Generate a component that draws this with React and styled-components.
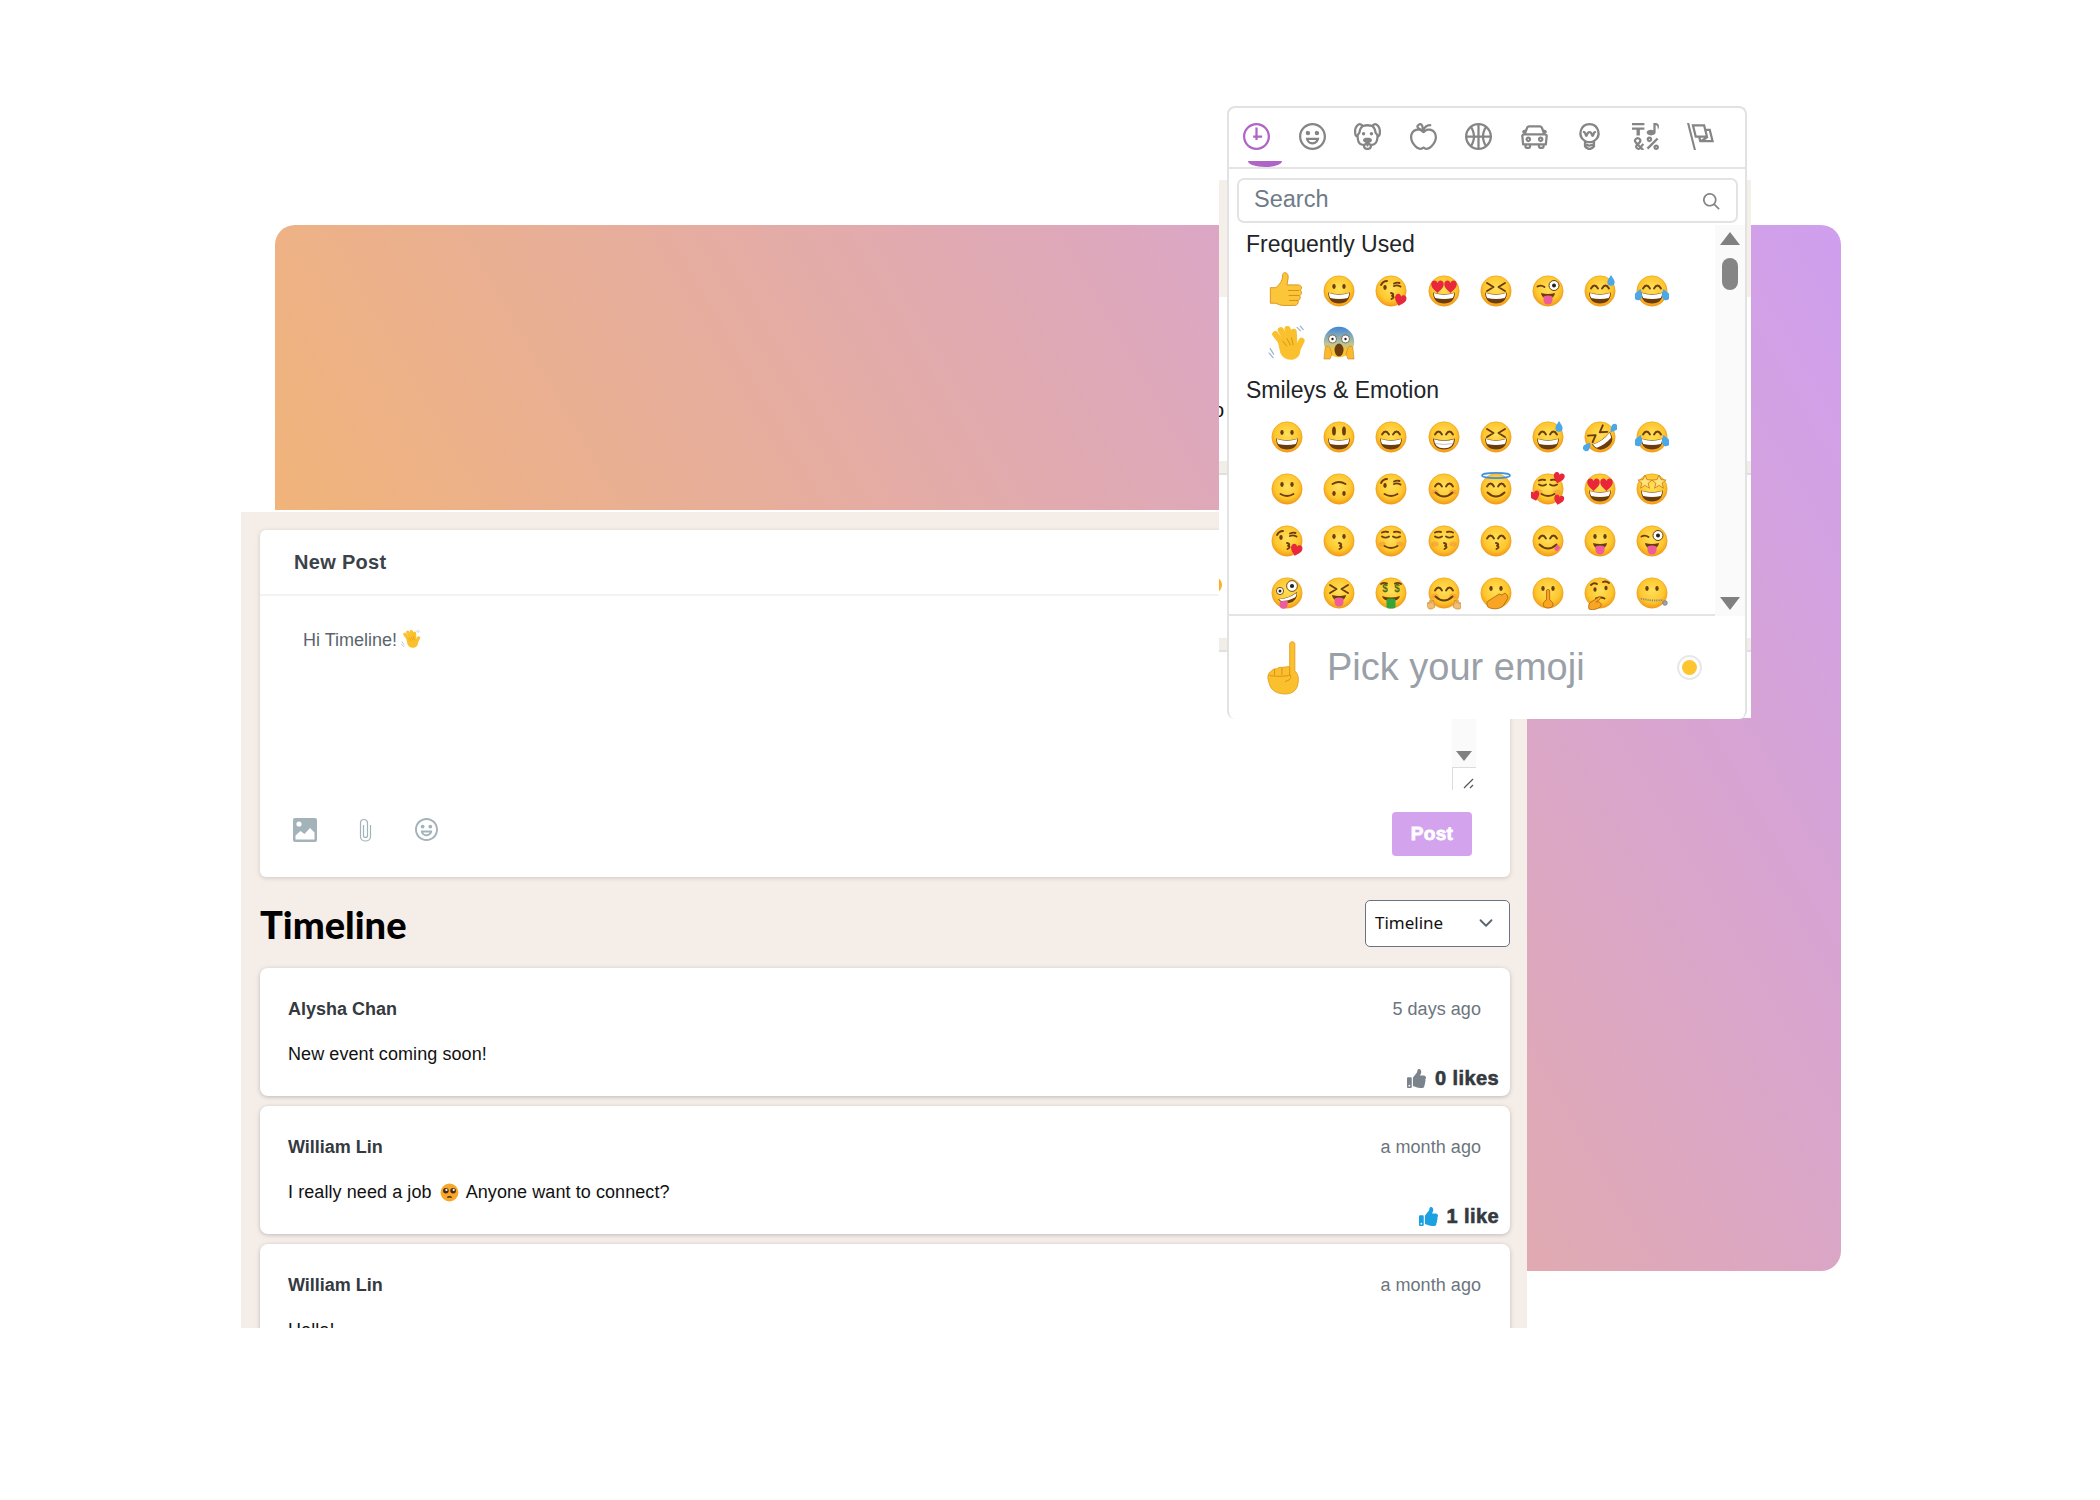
import React from 'react'
import styled, { createGlobalStyle } from 'styled-components'
import { FaThumbsUp } from 'react-icons/fa'
import { ChevronDown } from 'lucide-react'

const GlobalStyle = createGlobalStyle`
  html, body { margin: 0; padding: 0; background: #fff; }
  body { font-family: "Liberation Sans", Arial, sans-serif; }
  * { box-sizing: border-box; }
`

const Stage = styled.div`
  position: relative;
  width: 2100px;
  height: 1500px;
  padding: 225px 0 0 275px;
  overflow: hidden;
`

const Backdrop = styled.div`
  width: 1566px;
  height: 1046px;
  border-radius: 20px;
  background: linear-gradient(60deg, #f9b95c, #cf9fef);
`

const Panel = styled.main`
  position: absolute;
  left: 241px;
  top: 510px;
  width: 1286px;
  height: 818px;
  overflow: hidden;
  padding: 18px 17px 0 19px;
  border-top: 2px solid #fff;
  background: #f5eee8;
`

const PostCard = styled.section`
  position: relative;
  display: flex;
  flex-direction: column;
  height: 347px;
  border-radius: 6px;
  background: #fff;
  box-shadow: 0 1px 4px rgba(90, 80, 70, 0.25);
`

const PostHeader = styled.h2`
  display: flex;
  align-items: center;
  height: 66px;
  margin: 0;
  padding-left: 34px;
  border-bottom: 2px solid #f3f3f3;
  color: #3b4249;
  font-size: 20px;
  font-weight: 700;
  letter-spacing: 0.3px;
`

const PostBody = styled.div`
  display: flex;
  flex: 1;
  align-items: flex-start;
  padding: 33px 0 0 43px;
  color: #5b646d;
  font-size: 18px;
  line-height: 22px;
`

const TextScroll = styled.div`
  position: absolute;
  left: 1192px;
  top: 188px;
  display: flex;
  align-items: flex-end;
  justify-content: center;
  width: 24px;
  height: 50px;
  padding-bottom: 7px;
  background: #fafafa;
`

const DownArrow = styled.span`
  width: 0;
  height: 0;
  border-left: ${p => p.$w}px solid transparent;
  border-right: ${p => p.$w}px solid transparent;
  border-top: ${p => p.$h}px solid #808080;
`

const UpArrow = styled.span`
  width: 0;
  height: 0;
  border-left: 10px solid transparent;
  border-right: 10px solid transparent;
  border-bottom: 13px solid #808080;
`

const Resizer = styled.div`
  position: absolute;
  left: 1192px;
  top: 237px;
  display: flex;
  align-items: flex-end;
  justify-content: flex-end;
  width: 24px;
  height: 23px;
  border-top: 1px solid #dcdcdc;
  border-left: 1px solid #dcdcdc;
`

const PostTools = styled.div`
  display: flex;
  align-items: center;
  justify-content: space-between;
  padding: 0 38px 21px 14px;
`

const ToolIcons = styled.div`
  display: flex;
  margin-bottom: 9px;
`

const ToolSlot = styled.span`
  display: flex;
  align-items: center;
  justify-content: center;
  width: 61px;
  height: 24px;
`

const PostButton = styled.button`
  width: 80px;
  height: 44px;
  padding: 0;
  border: 0;
  border-radius: 4px;
  background: #d3a3ee;
  color: #fff;
  font-family: inherit;
  font-size: 19px;
  font-weight: 700;
  letter-spacing: 0.3px;
  -webkit-text-stroke: 0.8px #fff;
`

const TimelineBar = styled.div`
  display: flex;
  align-items: center;
  justify-content: space-between;
  margin: 23px 0 21px;
`

const TimelineTitle = styled.h1`
  margin: 0;
  color: #000;
  font-family: Lato, sans-serif;
  font-size: 38px;
  font-weight: 900;
`

const FeedSelect = styled.div`
  display: flex;
  align-items: center;
  justify-content: space-between;
  width: 145px;
  height: 47px;
  padding: 0 12px 2px 9px;
  border: 1px solid #6b7280;
  border-radius: 5px;
  background: #fff;
  color: #111;
  font-family: "Noto Sans", sans-serif;
  font-size: 17px;
`

const Feed = styled.div`
  display: flex;
  flex-direction: column;
  gap: 10px;
`

const FeedCard = styled.article`
  height: 128px;
  padding: 29px 29px 0 28px;
  border-radius: 8px;
  background: #fff;
  box-shadow: 0 1px 4px rgba(90, 90, 100, 0.35);
`

const FeedHead = styled.div`
  display: flex;
  justify-content: space-between;
  line-height: 24px;
`

const Author = styled.strong`
  color: #343a40;
  font-size: 18px;
`

const When = styled.span`
  color: #6c757d;
  font-size: 18px;
  letter-spacing: 0.05px;
`

const Message = styled.p`
  display: flex;
  align-items: center;
  margin: 21px 0 0;
  color: #111;
  font-size: 18px;
  line-height: 24px;
  letter-spacing: 0.08px;
`

const Likes = styled.div`
  display: flex;
  align-items: center;
  justify-content: flex-end;
  gap: 9px;
  margin-right: -18px;
  color: #343a40;
  font-size: 20px;
  font-weight: 700;
  line-height: 24px;
  letter-spacing: 0.4px;
  -webkit-text-stroke: 0.6px #343a40;
`

const ThumbIcon = styled(FaThumbsUp)`
  width: 19px;
  height: 19px;
  color: ${p => (p.$active ? '#1ba1e2' : '#7b848c')};
`

const PickerShade = styled.div`
  position: absolute;
  left: 1219px;
  top: 180px;
  width: 532px;
  height: 538px;
  overflow: hidden;
  background: linear-gradient(
    #f4efe9 0 117px,
    #fff 117px 281px,
    #f1ede7 281px 293px,
    #dfe0e2 293px 295px,
    #fff 295px 458px,
    #f1ede7 458px 470px,
    #dfe0e2 470px 472px,
    #fff 472px
  );
`

const PeekLetter = styled.span`
  position: absolute;
  left: -6px;
  top: 218px;
  color: #111;
  font-size: 20px;
  line-height: 24px;
`

const PeekDot = styled.span`
  position: absolute;
  left: -13px;
  top: 397px;
  width: 16px;
  height: 16px;
  border-radius: 50%;
  background: #fdb022;
`

const Picker = styled.aside`
  position: absolute;
  left: 1227px;
  top: 106px;
  display: flex;
  flex-direction: column;
  width: 520px;
  height: 613px;
  overflow: hidden;
  border: 2px solid #e2e2e2;
  border-bottom: 0;
  border-radius: 8px;
  background: #fff;
  color: #222427;
`

const PickerTabs = styled.nav`
  display: grid;
  grid-template-columns: repeat(9, 55.5px);
  flex: none;
  height: 61px;
  border-bottom: 2px solid #e4e4e4;
`

const PickerTab = styled.span`
  position: relative;
  display: flex;
  align-items: center;
  justify-content: center;
  padding-bottom: 2px;
  color: ${p => (p.$active ? '#ae65c5' : '#858585')};
`

const TabMark = styled.i`
  position: absolute;
  left: 19px;
  bottom: 0;
  width: 34px;
  height: 6px;
  border-radius: 0 0 50% 50% / 0 0 100% 100%;
  background: #ae65c5;
`

const SearchBox = styled.div`
  display: flex;
  flex: none;
  align-items: center;
  justify-content: space-between;
  height: 45px;
  margin: 9px 7px 2px 8px;
  padding: 0 16px 2px 15px;
  border: 2px solid #e3e3e3;
  border-radius: 7px;
  color: #6e7b88;
  font-size: 23.5px;
`

const SearchIcon = styled.svg`
  width: 17px;
  height: 17px;
  margin-top: 3px;
  fill: #858585;
`

const ScrollArea = styled.div`
  display: flex;
  flex: none;
  height: 391px;
`

const EmojiList = styled.div`
  flex: 1;
  overflow: hidden;
  border-bottom: 2px solid #e4e4e4;
`

const SectionLabel = styled.h3`
  height: 38px;
  margin: 0 0 2px;
  padding-left: 17px;
  font-size: 23px;
  font-weight: 400;
  line-height: 38px;
`

const EmojiGrid = styled.div`
  display: grid;
  grid-template-columns: repeat(8, 52.2px);
  grid-auto-rows: 52px;
  margin-bottom: 2px;
  padding-left: 32px;
`

const EmojiCell = styled.span`
  display: flex;
  align-items: center;
  justify-content: center;
`

const ScrollTrack = styled.div`
  position: relative;
  display: flex;
  flex: none;
  flex-direction: column;
  align-items: center;
  justify-content: space-between;
  width: 30px;
  padding: 7px 0 6px;
  background: #fafafa;
`

const ScrollThumb = styled.span`
  position: absolute;
  top: 33px;
  width: 16px;
  height: 32px;
  border-radius: 8px;
  background: #858585;
`

const Preview = styled.footer`
  display: flex;
  flex: 1;
  align-items: center;
  padding: 0 43px 0 29px;
`

const PreviewText = styled.span`
  flex: 1;
  margin-left: 15px;
  color: #9aa0a8;
  font-size: 38px;
`

const SkinDot = styled.span`
  display: flex;
  align-items: center;
  justify-content: center;
  width: 25px;
  height: 25px;
  border: 2px solid #e8e8e8;
  border-radius: 50%;

  &::after {
    content: '';
    width: 15px;
    height: 15px;
    border-radius: 50%;
    background: #ffc531;
  }
`

const EmojiSvg = styled.svg`
  flex: none;
  width: ${p => p.$size}px;
  height: ${p => p.$size}px;
  margin: ${p => p.$gap || '0'};
`

const ink = '#6b3d0e'
const line = { fill: 'none', stroke: ink, strokeWidth: 1.9, strokeLinecap: 'round', strokeLinejoin: 'round' }
const tongueFill = '#ee5c9c'

const Heart = ({ x, y, s = 1, r = 0 }) => (
  <path
    transform={`translate(${x} ${y}) rotate(${r}) scale(${s})`}
    fill="#e8273c"
    d="M0 -2C-1 -5 -5 -4.5 -5 -1C-5 2 -2 4 0 6C2 4 5 2 5 -1C5 -4.5 1 -5 0 -2Z"
  />
)

const Drop = ({ x, y, s = 1, r = 0 }) => (
  <path transform={`translate(${x} ${y}) rotate(${r}) scale(${s})`} fill="#4aa8e8" d="M0 -5C2 -2 3 -.5 3 1A3 3 0 0 1 -3 1C-3 -.5 -2 -2 0 -5Z" />
)

const Cheeks = () => (
  <g fill="#f7853a" opacity="0.45">
    <ellipse cx="8" cy="20" rx="3.6" ry="2.6" />
    <ellipse cx="26" cy="20" rx="3.6" ry="2.6" />
  </g>
)

const eyes = {
  dots: (
    <g fill={ink}>
      <ellipse cx="12" cy="12.5" rx="1.7" ry="2.4" />
      <ellipse cx="22" cy="12.5" rx="1.7" ry="2.4" />
    </g>
  ),
  tall: (
    <g fill={ink}>
      <ellipse cx="12" cy="11" rx="1.9" ry="4.6" />
      <ellipse cx="22" cy="11" rx="1.9" ry="4.6" />
    </g>
  ),
  happy: <path {...line} d="M8 14.5Q11.5 8.5 15 14.5M19 14.5Q22.5 8.5 26 14.5" />,
  squint: <path {...line} d="M8 9l6.5 4-6.5 4M26 9l-6.5 4 6.5 4" />,
  closed: <path {...line} d="M8 12.5q3.5 2.2 7 0M19 12.5q3.5 2.2 7 0M8 8.5q3-1.5 6-.5M20 8q3-1 6 .5" />,
  wink: (
    <g>
      <path {...line} d="M7 11q2-4 6-4M20 12q3-1.5 6.5 .5M20 9.5q3-1.5 5.5-.5" />
      <ellipse cx="11" cy="13.5" rx="1.7" ry="2.4" fill={ink} />
    </g>
  ),
  winkEye: (
    <g>
      <path {...line} d="M6.5 12.5q3.5-2 7 .5" />
      <circle cx="23" cy="11.5" r="5" fill="#fff" stroke={ink} strokeWidth="1" />
      <circle cx="23" cy="11.5" r="2" fill="#222" />
    </g>
  ),
  hearts: (
    <g>
      <Heart x={10.5} y={11.5} s={1.25} />
      <Heart x={23.5} y={11.5} s={1.25} />
    </g>
  ),
  stars: (
    <g fill="#ffe27a" stroke="#c9761a" strokeWidth="0.8">
      <path d="M10 3l2 4.6 5 .4-3.800 3.200 1.200 5-4.400-2.800-4.400 2.800 1.200-5L3 8l5-.4z" />
      <path d="M24 3l2 4.600 5 .4-3.800 3.200 1.200 5-4.400-2.800-4.400 2.800 1.200-5L17 8l5-.4z" />
    </g>
  ),
  brow: (
    <g>
      <path {...line} d="M8 9q3-3 6-1M20 6q3-1.5 6 1" />
      <ellipse cx="12" cy="13.5" rx="1.6" ry="2.2" fill={ink} />
      <ellipse cx="23" cy="12" rx="1.6" ry="2.2" fill={ink} />
    </g>
  ),
  money: (
    <g fill="#4a6b12" fontFamily="Liberation Sans, sans-serif" fontSize="10" fontWeight="700" textAnchor="middle">
      <text x="11" y="16">$</text>
      <text x="23" y="16">$</text>
      <path {...line} d="M7 8q3-2 6-.5M21 7.5q3-1.5 6 .5" />
    </g>
  ),
}

const mouths = {
  grin: (
    <g>
      <path fill={ink} d="M6 18.5Q17 22 28 18.5Q27.5 29.5 17 29.5Q6.5 29.5 6 18.5Z" />
      <path fill="#fff" d="M6.8 19Q17 22.4 27.2 19Q27 22.2 25.7 24Q17 26.2 8.3 24Q7 22.2 6.8 19Z" />
    </g>
  ),
  beam: (
    <g>
      <path fill={ink} d="M6 18.5Q17 22 28 18.5Q27.5 29.5 17 29.5Q6.5 29.5 6 18.5Z" />
      <path fill="#fff" d="M7 19.2Q17 22.4 27 19.2Q26.5 28.3 17 28.3Q7.5 28.3 7 19.2Z" />
      <path fill="none" stroke="#b9b4ae" strokeWidth="0.8" d="M8 23.5Q17 25.5 26 23.5" />
    </g>
  ),
  smile: <path {...line} d="M10.5 22Q17 26 23.5 22" />,
  big: <path {...line} d="M8.5 20.5Q17 28.5 25.5 20.5" />,
  kiss: <path {...line} d="M17 19q4 1 1 2.8q3.5 1.2-.5 3.2" />,
  tongue: (
    <g>
      <path fill={ink} d="M10 19Q17 21 24 19Q23.5 24.5 17 24.5Q10.5 24.5 10 19Z" />
      <path fill={tongueFill} d="M12.5 22.5Q17 20.5 21.5 22.5V26a4.5 4.5 0 0 1-9 0Z" />
    </g>
  ),
}

const faces = {
  grinning: [eyes.dots, mouths.grin],
  smiley: [eyes.tall, mouths.grin],
  smile: [eyes.happy, mouths.grin],
  beam: [eyes.happy, mouths.beam],
  laughing: [eyes.squint, mouths.grin],
  sweat: [eyes.happy, mouths.grin, <Drop key="d" x={28} y={7} s={1.2} />],
  rofl: [
    <g key="r" transform="rotate(-35 17 17)">{eyes.squint}{mouths.grin}</g>,
    <Drop key="a" x={4} y={27} s={1.1} r={40} />,
    <Drop key="b" x={31} y={8} s={1.1} r={220} />,
  ],
  joy: [eyes.happy, mouths.grin, <Drop key="a" x={3.5} y={21} s={1.3} r={20} />, <Drop key="b" x={30.5} y={21} s={1.3} r={-20} />],
  slight: [eyes.dots, mouths.smile],
  upside: [<g key="u" transform="rotate(180 17 17)">{eyes.dots}{mouths.smile}</g>],
  wink: [eyes.wink, mouths.smile],
  blush: [<Cheeks key="c" />, eyes.happy, mouths.big],
  innocent: [
    eyes.happy,
    mouths.big,
    <ellipse key="h" cx="17" cy="3.5" rx="14" ry="2.6" fill="none" stroke="#3f8fe0" strokeWidth="1.6" />,
  ],
  hearts: [
    <Cheeks key="c" />,
    eyes.closed,
    mouths.smile,
    <Heart key="a" x={28} y={5} s={1.1} r={15} />,
    <Heart key="b" x={3.5} y={23} s={1} r={-15} />,
    <Heart key="e" x={28} y={27} s={1} r={15} />,
  ],
  heartEyes: [eyes.hearts, mouths.grin],
  star: [mouths.grin, eyes.stars],
  kissHeart: [eyes.wink, mouths.kiss, <Heart key="h" x={26.5} y={25} s={1.15} r={15} />],
  kissing: [eyes.dots, mouths.kiss],
  relaxed: [<Cheeks key="c" />, eyes.closed, mouths.smile],
  kissClosed: [<Cheeks key="c" />, eyes.closed, mouths.kiss],
  kissSmiling: [eyes.happy, mouths.kiss],
  yum: [eyes.happy, mouths.big, <path key="t" fill={tongueFill} d="M23 25l3.5-4.5 3 3-3.5 4z" />],
  tongue: [eyes.dots, mouths.tongue],
  winkTongue: [eyes.winkEye, mouths.tongue],
  zany: [
    <circle key="a" cx="10" cy="15" r="3.6" fill="#fff" stroke={ink} strokeWidth="0.9" />,
    <circle key="b" cx="10" cy="15" r="1.5" fill="#222" />,
    <circle key="c" cx="22" cy="10" r="5.4" fill="#fff" stroke={ink} strokeWidth="0.9" />,
    <circle key="e" cx="22" cy="10" r="2.1" fill="#222" />,
    <path key="m" fill={ink} d="M8 23Q18 23 27 16Q28 25 19 27Q11 28 8 23Z" />,
    <path key="w" fill="#fff" d="M9 23Q18 23 26.6 17Q26.5 20 25 21.5Q17 25.5 11 25Z" />,
    <path key="t" fill={tongueFill} d="M10 26Q14 24 18 25.5L17.5 29a4 4 0 0 1-8-.5Z" />,
  ],
  squintTongue: [eyes.squint, mouths.tongue],
  money: [
    eyes.money,
    <path key="m" fill={ink} d="M8 20Q17 23 26 20Q25 25 17 25Q9 25 8 20Z" />,
    <rect key="t" x="12.5" y="22.5" width="9" height="10" rx="2" fill="#35a53a" />,
  ],
  hug: [
    <Cheeks key="c" />,
    eyes.happy,
    mouths.big,
    <g key="h" fill="#f0bd73" stroke="#c97f2d" strokeWidth="0.6">
      <path d="M0 30l1-4 1 2 1-4 1 3 2-3 1 4 1 3-3 2H2z" />
      <path d="M34 30l-1-4-1 2-1-4-1 3-2-3-1 4-1 3 3 2h4z" />
    </g>,
  ],
  handOver: [
    eyes.dots,
    <path key="h" fill="#f8a523" stroke="#b96a10" strokeWidth="0.9" d="M9 31c-2-3-1-6 2-7l9-6 3 1 3-2 2 2 1 3-5 8c-3 3-10 4-15 1z" />,
  ],
  shush: [
    eyes.dots,
    <path key="h" fill="#f8a523" stroke="#b96a10" strokeWidth="0.9" d="M15.5 15a1.6 1.6 0 0 1 3.2 0V24c2 1 4 3 3 6-1 2-7 3-9 0-1-2 0-5 2.8-6Z" />,
  ],
  thinking: [
    eyes.brow,
    <path key="m" {...line} d="M13 22.5q5-2 8.5 0" />,
    <path key="h" fill="#f8a523" stroke="#b96a10" strokeWidth="0.9" d="M6 33c-1-3 0-6 2-7l8-5c2-1 2 2 0 3l-3 2c3-1 6 1 5 4-1 2-8 5-12 3z" />,
  ],
  zipper: [
    eyes.dots,
    <path key="z" fill="none" stroke="#7f8890" strokeWidth="1.8" strokeDasharray="1.2 1" d="M6 22.5Q17 25.5 28 24" />,
    <circle key="t" cx="30" cy="27" r="2.4" fill="#9aa1a8" stroke="#666" strokeWidth="0.5" />,
  ],
}

const FaceGradients = () => (
  <defs>
    <radialGradient id="faceFill" cx="50%" cy="42%" r="58%">
      <stop offset="0" stopColor="#ffe05a" />
      <stop offset="0.68" stopColor="#fec72e" />
      <stop offset="1" stopColor="#f39a17" />
    </radialGradient>
    <linearGradient id="screamFill" x1="0" y1="0" x2="0" y2="1">
      <stop offset="0" stopColor="#3f86dc" />
      <stop offset="0.55" stopColor="#b8c59a" />
      <stop offset="0.8" stopColor="#fcc52c" />
    </linearGradient>
  </defs>
)

const Face = ({ name, size = 34, gap }) => (
  <EmojiSvg viewBox="0 0 34 34" $size={size} $gap={gap}>
    <FaceGradients />
    <circle cx="17" cy="17" r="15.2" fill="url(#faceFill)" stroke="#e89a1f" strokeWidth="0.5" />
    {faces[name].map((part, i) => (
      <React.Fragment key={i}>{part}</React.Fragment>
    ))}
  </EmojiSvg>
)

const ThumbEmoji = () => (
  <EmojiSvg viewBox="0 0 34 36" $size={40}>
    <path fill="#fcc63a" stroke="#d98d16" strokeWidth="0.8" d="M15 1.500c2.400 0 3.400 2.200 3 5l-1 6h10c3.400 0 3.800 3.600 2 4.800 1.800 1.600 1.200 4-.6 4.700 1.200 2 .2 4-1.400 4.500.6 2.300-.6 4.500-3.200 4.500H14c-3 0-5-1-7-2H2V15h5c3-2.500 6-6 6-10.500 0-2 .9-3 2-3z" />
    <path fill="none" stroke="#d98d16" strokeWidth="0.9" d="M18 17.500h10M18.500 22h9.500M19 26.500h8" />
  </EmojiSvg>
)

const WaveEmoji = ({ size = 38, gap }) => (
  <EmojiSvg viewBox="0 0 34 34" $size={size} $gap={gap}>
    <g stroke="#fbc02d" strokeWidth="5.500" strokeLinecap="round" fill="none">
      <path d="M15 20L6.500 9" />
      <path d="M18 17L11.500 5.500" />
      <path d="M21 16L17.500 4.500" />
      <path d="M23.500 17L23 7" />
      <path d="M25.500 24L30 15" />
    </g>
    <path fill="#fbc02d" d="M9 17l16-2 4 8c0 6-4 9-9 9-4 0-7-2-9-6z" />
    <path fill="none" stroke="#d98d16" strokeWidth="0.8" d="M13 15l4 5M17 13l3 6M21 12l1.500 7" />
    <path fill="none" stroke="#9fb4d4" strokeWidth="1.100" strokeLinecap="round" d="M2 22l3 5M1 26l3.500 4M26 3l3 3M29 2l2.500 3" />
  </EmojiSvg>
)

const ScreamEmoji = () => (
  <EmojiSvg viewBox="0 0 34 34" $size={34}>
    <FaceGradients />
    <circle cx="17" cy="16" r="15.200" fill="url(#screamFill)" />
    <circle cx="10.500" cy="13" r="4" fill="#fff" stroke={ink} strokeWidth="0.7" />
    <circle cx="23.500" cy="13" r="4" fill="#fff" stroke={ink} strokeWidth="0.7" />
    <circle cx="10.500" cy="13" r="1.200" fill="#222" />
    <circle cx="23.500" cy="13" r="1.200" fill="#222" />
    <ellipse cx="17" cy="24" rx="4.500" ry="6.500" fill={ink} />
    <g fill="#fcb92c" stroke="#c97f2d" strokeWidth="0.6">
      <path d="M2 33l1-10c0-3 4-4 5-1l2 6-2 5z" />
      <path d="M32 33l-1-10c0-3-4-4-5-1l-2 6 2 5z" />
    </g>
  </EmojiSvg>
)

const PointEmoji = () => (
  <EmojiSvg viewBox="0 0 34 52" $size={54}>
    <path fill="#fbc02d" stroke="#e29a1c" strokeWidth="0.8" d="M21.500 3c0-3 5-3 5 0v26c3 2 4 7 3 12-1 7-6 10-12 10-8 0-13-3-15-8-1-3-2-6-2-8 0-3 1.500-5 3.500-6 1-2 3.500-2.500 5-2 1-1.500 3-2 5-1.500l7.500-1z" />
    <path fill="none" stroke="#d98d16" strokeWidth="0.9" d="M7 27v6M14 25.500v7M21.500 25v8M2 33c4 1.500 16 1 20 0 2 3-1 5-5 6" />
  </EmojiSvg>
)

const SmallFrown = () => (
  <EmojiSvg viewBox="0 0 34 34" $size={19} $gap="0 7px 0 8px">
    <circle cx="17" cy="17" r="16" fill="#f9a72a" />
    <circle cx="10.500" cy="14" r="5" fill="#4a2c12" />
    <circle cx="23.500" cy="14" r="5" fill="#4a2c12" />
    <circle cx="11.500" cy="12.500" r="2" fill="#fff" />
    <circle cx="24.500" cy="12.500" r="2" fill="#fff" />
    <path fill="none" stroke="#4a2c12" strokeWidth="2.400" d="M13 26q4-3 8 0" />
  </EmojiSvg>
)

const frequentRow = ['grinning', 'kissHeart', 'heartEyes', 'laughing', 'winkTongue', 'sweat', 'joy']

const smileys = [
  'grinning', 'smiley', 'smile', 'beam', 'laughing', 'sweat', 'rofl', 'joy',
  'slight', 'upside', 'wink', 'blush', 'innocent', 'hearts', 'heartEyes', 'star',
  'kissHeart', 'kissing', 'relaxed', 'kissClosed', 'kissSmiling', 'yum', 'tongue', 'winkTongue',
  'zany', 'squintTongue', 'money', 'hug', 'handOver', 'shush', 'thinking', 'zipper',
]

const tabPaths = [
  ['M13 4h-2l-.001 7H9v2h2v2h2v-2h4v-2h-4z', 'M12 0C5.373 0 0 5.373 0 12s5.373 12 12 12 12-5.373 12-12S18.627 0 12 0m0 22C6.486 22 2 17.514 2 12S6.486 2 12 2s10 4.486 10 10-4.486 10-10 10'],
  ['M12 0C5.373 0 0 5.373 0 12s5.373 12 12 12 12-5.373 12-12S18.627 0 12 0m0 22C6.486 22 2 17.514 2 12S6.486 2 12 2s10 4.486 10 10-4.486 10-10 10', 'M8 7a2 2 0 1 0-.001 3.999A2 2 0 0 0 8 7M16 7a2 2 0 1 0-.001 3.999A2 2 0 0 0 16 7M15.232 15c-.693 1.195-1.87 2-3.349 2-1.477 0-2.655-.805-3.347-2H15m3-2H6a6 6 0 1 0 12 0'],
  ['M15.5 8a1.5 1.5 0 1 0 .001 3.001A1.5 1.5 0 0 0 15.5 8M8.5 8a1.5 1.5 0 1 0 .001 3.001A1.5 1.5 0 0 0 8.5 8', 'M18.933 0h-.027c-.97 0-2.138.787-3.018 1.497-1.274-.374-2.612-.51-3.887-.51-1.285 0-2.616.133-3.874.517C7.245.79 6.069 0 5.093 0h-.027C3.352 0 .07 2.67.002 7.026c-.039 2.479.276 4.238 1.04 5.013.254.258.882.677 1.295.882.191 3.177.922 5.238 2.536 6.38.897.637 2.187.949 3.2 1.102C8.04 20.6 8 20.795 8 21c0 1.773 2.35 3 4 3 1.648 0 4-1.227 4-3 0-.201-.038-.393-.072-.586 2.573-.385 5.435-1.877 5.925-7.587.396-.22.887-.568 1.104-.788.763-.774 1.079-2.534 1.04-5.013C23.929 2.67 20.646 0 18.933 0M3.223 9.135c-.237.281-.837 1.155-.884 1.238-.15-.41-.368-1.349-.337-3.291.051-3.281 2.478-4.972 3.091-5.031.256.015.731.27 1.265.646-1.11 1.171-2.275 2.915-2.352 5.125-.133.546-.398.858-.783 1.313M12 22c-.901 0-1.954-.693-2-1 0-.654.475-1.236 1-1.602V20a1 1 0 1 0 2 0v-.602c.524.365 1 .947 1 1.602-.046.307-1.099 1-2 1m3-3.48v.02a4.752 4.752 0 0 0-1.262-1.02c1.092-.516 2.239-1.334 2.239-2.217 0-1.842-1.781-2.195-3.977-2.195-2.196 0-3.978.354-3.978 2.195 0 .883 1.148 1.701 2.238 2.217A4.8 4.8 0 0 0 9 18.539v-.025c-1-.076-2.182-.281-2.973-.842-1.301-.92-1.838-3.045-1.853-6.478l.023-.041c.496-.826 1.49-1.45 1.804-3.102 0-2.047 1.357-3.631 2.362-4.522C9.37 3.178 10.555 3 11.948 3c1.447 0 2.685.192 3.733.57 1 .9 2.316 2.465 2.316 4.48.313 1.651 1.307 2.275 1.803 3.102.035.058.068.117.102.178-.059 5.967-1.949 7.01-4.902 7.19m6.628-8.202c-.037-.065-.074-.13-.113-.195a7.587 7.587 0 0 0-.739-.987c-.385-.455-.648-.768-.782-1.313-.076-2.209-1.241-3.954-2.353-5.124.531-.376 1.004-.63 1.261-.647.636.071 3.044 1.764 3.096 5.031.027 1.81-.347 3.218-.37 3.235'],
  ['M17 4.978c-1.838 0-2.876.396-3.68.934.513-1.172 1.768-2.934 4.68-2.934a1 1 0 0 0 0-2c-2.921 0-4.629 1.365-5.547 2.512-.064.078-.119.162-.18.244C11.73 1.838 10.798.023 9.207.023 8.579.022 7.85.306 7 .978 5.027 2.54 5.329 3.902 6.492 4.999 3.609 5.222 0 7.352 0 12.969c0 4.582 4.961 11.009 9 11.009 1.975 0 2.371-.486 3-1 .629.514 1.025 1 3 1 4.039 0 9-6.418 9-11 0-5.953-4.055-8-7-8M8.242 2.546c.641-.508.943-.523.965-.523.426.169.975 1.405 1.357 3.055-1.527-.629-2.741-1.352-2.98-1.846.059-.112.241-.356.658-.686M15 21.978c-1.08 0-1.21-.109-1.559-.402l-.176-.146c-.367-.302-.816-.452-1.266-.452s-.898.15-1.266.452l-.176.146c-.347.292-.477.402-1.557.402-2.813 0-7-5.389-7-9.009 0-5.823 4.488-5.991 5-5.991 1.939 0 2.484.471 3.387 1.251l.323.276a1.995 1.995 0 0 0 2.58 0l.323-.276c.902-.78 1.447-1.251 3.387-1.251.512 0 5 .168 5 6 0 3.617-4.187 9-7 9'],
  ['M12 0C5.373 0 0 5.372 0 12c0 6.627 5.373 12 12 12 6.628 0 12-5.373 12-12 0-6.628-5.372-12-12-12m9.949 11H17.05c.224-2.527 1.232-4.773 1.968-6.113A9.966 9.966 0 0 1 21.949 11M13 11V2.051a9.945 9.945 0 0 1 4.432 1.564c-.858 1.491-2.156 4.22-2.392 7.385H13zm-2 0H8.961c-.238-3.165-1.536-5.894-2.393-7.385A9.95 9.95 0 0 1 11 2.051V11zm0 2v8.949a9.937 9.937 0 0 1-4.432-1.564c.857-1.492 2.155-4.221 2.393-7.385H11zm4.04 0c.236 3.164 1.534 5.893 2.392 7.385A9.92 9.92 0 0 1 13 21.949V13h2.04zM4.982 4.887C5.718 6.227 6.726 8.473 6.951 11h-4.9a9.977 9.977 0 0 1 2.931-6.113M2.051 13h4.9c-.226 2.527-1.233 4.771-1.969 6.113A9.972 9.972 0 0 1 2.051 13m16.967 6.113c-.735-1.342-1.744-3.586-1.968-6.113h4.899a9.961 9.961 0 0 1-2.931 6.113'],
  ['M6.5 12C5.122 12 4 13.121 4 14.5S5.122 17 6.5 17 9 15.879 9 14.5 7.878 12 6.5 12m0 3c-.275 0-.5-.225-.5-.5s.225-.5.5-.5.5.225.5.5-.225.5-.5.5M17.5 12c-1.378 0-2.5 1.121-2.5 2.5s1.122 2.5 2.5 2.5 2.5-1.121 2.5-2.5-1.122-2.5-2.5-2.5m0 3c-.275 0-.5-.225-.5-.5s.225-.5.5-.5.5.225.5.5-.225.5-.5.5', 'M22.482 9.494l-1.039-.346L21.4 9h.6c.552 0 1-.439 1-.992 0-.006-.003-.008-.003-.008H23c0-1-.889-2-1.984-2h-.642l-.731-1.717C19.262 3.012 18.091 2 16.764 2H7.236C5.909 2 4.738 3.012 4.357 4.283L3.626 6h-.642C1.889 6 1 7 1 8h.003S1 8.002 1 8.008C1 8.561 1.448 9 2 9h.6l-.043.148-1.039.346a2.001 2.001 0 0 0-1.359 2.097l.751 7.508a1 1 0 0 0 .994.901H3v1c0 1.103.896 2 2 2h2c1.104 0 2-.897 2-2v-1h6v1c0 1.103.896 2 2 2h2c1.104 0 2-.897 2-2v-1h1.096a.999.999 0 0 0 .994-.901l.751-7.508a2.001 2.001 0 0 0-1.359-2.097M6.273 4.857C6.402 4.43 6.788 4 7.236 4h9.527c.448 0 .834.43.963.857L19.313 9H4.688l1.585-4.143zM7 21H5v-1h2v1zm12 0h-2v-1h2v1zm2.189-3H2.811l-.662-6.607L3 11h18l.852.393L21.189 18z'],
  ['M12 0a9 9 0 0 0-5 16.482V21s2.035 3 5 3 5-3 5-3v-4.518A9 9 0 0 0 12 0zm0 2c3.86 0 7 3.141 7 7s-3.14 7-7 7-7-3.141-7-7 3.14-7 7-7zM9 17.477c.94.332 1.946.523 3 .523s2.06-.19 3-.523v.834c-.91.436-1.925.689-3 .689a6.924 6.924 0 0 1-3-.69v-.833zm.236 3.07A8.854 8.854 0 0 0 12 21c.965 0 1.888-.167 2.758-.451C14.155 21.173 13.153 22 12 22c-1.102 0-2.117-.789-2.764-1.453z', 'M14.745 12.449h-.004c-.852-.024-1.188-.858-1.577-1.824-.421-1.061-.703-1.561-1.182-1.566h-.009c-.481 0-.783.497-1.235 1.537-.436.982-.801 1.811-1.636 1.791l-.276-.043c-.565-.171-.853-.691-1.284-1.794-.125-.313-.202-.632-.27-.913-.051-.213-.127-.53-.195-.634C7.067 9.004 7.039 9 6.99 9A1 1 0 0 1 7 7h.01c1.662.017 2.015 1.373 2.198 2.134.486-.981 1.304-2.058 2.797-2.075 1.531.018 2.28 1.153 2.731 2.141l.002-.008C14.944 8.424 15.327 7 16.979 7h.032A1 1 0 1 1 17 9h-.011c-.149.076-.256.474-.319.709a6.484 6.484 0 0 1-.311.951c-.429.973-.79 1.789-1.614 1.789'],
  ['M0 0h11v2H0zM4 11h3V6h4V4H0v2h4zM15.500 17c1.381 0 2.500-1.116 2.500-2.493s-1.119-2.493-2.500-2.493S13 13.130 13 14.507 14.119 17 15.500 17m0-2.986c.276 0 .5.222.5.493 0 .272-.224.493-.5.493s-.5-.221-.5-.493.224-.493.5-.493M21.500 19.014c-1.381 0-2.500 1.116-2.500 2.493S20.119 24 21.500 24s2.500-1.116 2.500-2.493-1.119-2.493-2.500-2.493m0 2.986a.497.497 0 0 1-.5-.493c0-.271.224-.493.5-.493s.5.222.5.493a.497.497 0 0 1-.5.493M22 13l-9 9 1.513 1.500 8.990-9.009zM17 11c2.209 0 4-1.119 4-2.500V2s.985-.161 1.498.949C23.010 4.055 23 6 23 6s1-1.119 1-3.135C24-.020 21 0 21 0h-2v6.347A5.853 5.853 0 0 0 17 6c-2.209 0-4 1.119-4 2.500s1.791 2.500 4 2.500'],
  ['M0 0l6.084 24H8L1.916 0zM21 5h-4l-1-4H4l3 12h3l1 4h13L21 5zM6.563 3h7.875l2 8H8.563l-2-8zm8.832 10l-2.856 1.904L12.063 13h3.332zM19 13l-1.500-6h1.938l2 8H16l3-2z'],
]

const TabIcon = ({ paths, amp }) => (
  <svg width="27" height="27" viewBox="0 0 24 24" fill="currentColor">
    {paths.map(d => <path key={d} d={d} />)}
    {amp && <path fill="none" stroke="currentColor" strokeWidth="2" d="M10 24L3.500 17.500a2.300 2.300 0 1 1 3.500-.5l-3 3a2 2 0 0 0 3 2.500L10 18.500" />}
  </svg>
)

const ImageIcon = () => (
  <svg width="24" height="24" viewBox="0 0 24 24">
    <rect width="24" height="24" rx="2" fill="#a3b3ba" />
    <circle cx="6" cy="6" r="2.600" fill="#fff" />
    <path fill="#fff" d="M2.500 21.500v-4l5-4.500 4 3 5.500-6 4.500 4.500v7z" />
  </svg>
)

const ClipIcon = () => (
  <svg width="15" height="24" viewBox="0 0 15 24" fill="none" stroke="#a3b3ba" strokeWidth="1.200">
    <path d="M5.500 7v10.500a2 2 0 0 0 4 0V5a3.500 3.500 0 0 0-7 0v14a5 4 0 0 0 10 0V7" />
  </svg>
)

const SmileIcon = () => (
  <svg width="23" height="23" viewBox="0 0 24 24" fill="#a3b3ba">
    <path d={tabPaths[1][0]} />
    <path d={tabPaths[1][1]} />
  </svg>
)

const ResizeGrip = () => (
  <svg width="14" height="14" viewBox="0 0 14 14" stroke="#555" strokeWidth="1.200">
    <path d="M2 12L11 3M8 12l3-3" />
  </svg>
)

const posts = [
  { id: 1, name: 'Alysha Chan', when: '5 days ago', text: 'New event coming soon!', likes: '0 likes' },
  { id: 2, name: 'William Lin', when: 'a month ago', pre: 'I really need a job', text: 'Anyone want to connect?', likes: '1 like', liked: true },
  { id: 3, name: 'William Lin', when: 'a month ago', text: 'Hello!', likes: '' },
]

const App = () => (
  <Stage>
    <GlobalStyle />
    <Backdrop />
    <Panel>
      <PostCard>
        <PostHeader>New Post</PostHeader>
        <PostBody>
          Hi Timeline!<WaveEmoji size={20} gap="0 0 0 4px" />
        </PostBody>
        <TextScroll><DownArrow $w={8} $h={10} /></TextScroll>
        <Resizer><ResizeGrip /></Resizer>
        <PostTools>
          <ToolIcons>
            <ToolSlot><ImageIcon /></ToolSlot>
            <ToolSlot><ClipIcon /></ToolSlot>
            <ToolSlot><SmileIcon /></ToolSlot>
          </ToolIcons>
          <PostButton>Post</PostButton>
        </PostTools>
      </PostCard>

      <TimelineBar>
        <TimelineTitle>Timeline</TimelineTitle>
        <FeedSelect>
          Timeline
          <ChevronDown size={22} color="#5b6470" strokeWidth={2} />
        </FeedSelect>
      </TimelineBar>

      <Feed>
        {posts.map(post => (
          <FeedCard key={post.id}>
            <FeedHead>
              <Author>{post.name}</Author>
              <When>{post.when}</When>
            </FeedHead>
            <Message>
              {post.pre}
              {post.pre && <SmallFrown />}
              {post.text}
            </Message>
            {post.likes && (
              <Likes>
                <ThumbIcon $active={post.liked} />
                {post.likes}
              </Likes>
            )}
          </FeedCard>
        ))}
      </Feed>
    </Panel>

    <PickerShade>
      <PeekLetter>o</PeekLetter>
      <PeekDot />
    </PickerShade>

    <Picker>
      <PickerTabs>
        {tabPaths.map((paths, i) => (
          <PickerTab key={i} $active={i === 0}>
            <TabIcon paths={paths} amp={i === 7} />
            {i === 0 && <TabMark />}
          </PickerTab>
        ))}
      </PickerTabs>
      <SearchBox>
        Search
        <SearchIcon viewBox="0 0 20 20">
          <path d="M12.900 14.320a8 8 0 1 1 1.410-1.410l5.350 5.330-1.420 1.420-5.330-5.340zM8 14A6 6 0 1 0 8 2a6 6 0 0 0 0 12z" />
        </SearchIcon>
      </SearchBox>
      <ScrollArea>
        <EmojiList>
          <SectionLabel>Frequently Used</SectionLabel>
          <EmojiGrid>
            <EmojiCell><ThumbEmoji /></EmojiCell>
            {frequentRow.map(name => <EmojiCell key={name}><Face name={name} /></EmojiCell>)}
            <EmojiCell><WaveEmoji /></EmojiCell>
            <EmojiCell><ScreamEmoji /></EmojiCell>
          </EmojiGrid>
          <SectionLabel>Smileys &amp; Emotion</SectionLabel>
          <EmojiGrid>
            {smileys.map(name => <EmojiCell key={name}><Face name={name} /></EmojiCell>)}
          </EmojiGrid>
        </EmojiList>
        <ScrollTrack>
          <UpArrow />
          <ScrollThumb />
          <DownArrow $w={10} $h={13} />
        </ScrollTrack>
      </ScrollArea>
      <Preview>
        <PointEmoji />
        <PreviewText>Pick your emoji</PreviewText>
        <SkinDot />
      </Preview>
    </Picker>
  </Stage>
)

export default App
